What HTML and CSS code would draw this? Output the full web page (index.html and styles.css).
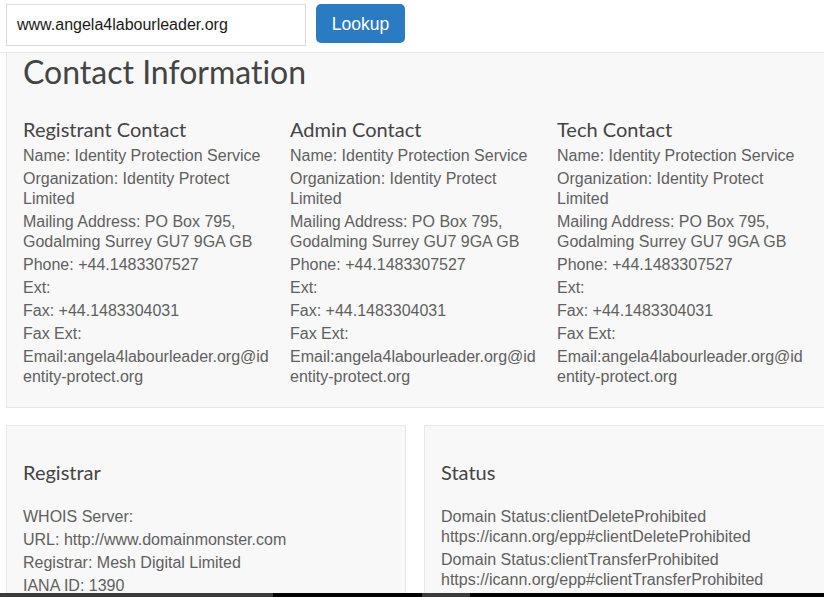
FILE: index.html
```html
<!DOCTYPE html>
<html>
<head>
<meta charset="utf-8">
<link rel="stylesheet" href="styles.css">
</head>
<body>
<header class="topbar">
  <div class="search-input">www.angela4labourleader.org</div>
  <button class="lookup-btn">Lookup</button>
</header>

<section class="panel contact">
  <h1 class="title">Contact Information</h1>
  <div class="cols">
    <div class="col">
      <h3 class="sub">Registrant Contact</h3>
      <p>Name: Identity Protection Service</p>
      <p>Organization: Identity Protect Limited</p>
      <p>Mailing Address: PO Box 795, Godalming Surrey GU7 9GA GB</p>
      <p>Phone: +44.1483307527</p>
      <p>Ext:</p>
      <p>Fax: +44.1483304031</p>
      <p>Fax Ext:</p>
      <p>Email:angela4labourleader.org@identity-protect.org</p>
    </div>
    <div class="col">
      <h3 class="sub">Admin Contact</h3>
      <p>Name: Identity Protection Service</p>
      <p>Organization: Identity Protect Limited</p>
      <p>Mailing Address: PO Box 795, Godalming Surrey GU7 9GA GB</p>
      <p>Phone: +44.1483307527</p>
      <p>Ext:</p>
      <p>Fax: +44.1483304031</p>
      <p>Fax Ext:</p>
      <p>Email:angela4labourleader.org@identity-protect.org</p>
    </div>
    <div class="col">
      <h3 class="sub">Tech Contact</h3>
      <p>Name: Identity Protection Service</p>
      <p>Organization: Identity Protect Limited</p>
      <p>Mailing Address: PO Box 795, Godalming Surrey GU7 9GA GB</p>
      <p>Phone: +44.1483307527</p>
      <p>Ext:</p>
      <p>Fax: +44.1483304031</p>
      <p>Fax Ext:</p>
      <p>Email:angela4labourleader.org@identity-protect.org</p>
    </div>
  </div>
</section>

<div class="lower">
  <section class="panel box registrar">
    <h3 class="sub spaced">Registrar</h3>
    <p>WHOIS Server:</p>
    <p>URL: http://www.domainmonster.com</p>
    <p>Registrar: Mesh Digital Limited</p>
    <p>IANA ID: 1390</p>
  </section>
  <section class="panel box status">
    <h3 class="sub spaced">Status</h3>
    <p>Domain Status:clientDeleteProhibited https://icann.org/epp#clientDeleteProhibited</p>
    <p>Domain Status:clientTransferProhibited https://icann.org/epp#clientTransferProhibited</p>
  </section>
</div>

<div class="taskstrip">
  <span class="seg gray w1"></span>
  <span class="seg black w2"></span>
  <span class="seg gray w3"></span>
  <span class="seg black fill"></span>
</div>
</body>
</html>
```

FILE: styles.css
```css
html, body {
  margin: 0;
  padding: 0;
  height: 100%;
  overflow: hidden;
  background: #ffffff;
  font-family: "Liberation Sans", Arial, sans-serif;
  font-size: 16px;
  color: #606060;
}

.topbar {
  display: flex;
  align-items: flex-start;
  gap: 10px;
  padding: 4px 6px 6px 6px;
  height: 42px;
  border-bottom: 1px solid #e8e8e8;
}

.search-input {
  box-sizing: border-box;
  width: 300px;
  height: 42px;
  border: 1px solid #dcdcdc;
  padding: 0 10px;
  line-height: 40px;
  font-size: 16px;
  color: #1a1a1a;
  background: #fff;
}

.lookup-btn {
  box-sizing: border-box;
  width: 89px;
  height: 39px;
  border: none;
  border-radius: 5px;
  background: #2b7bc4;
  color: #ffffff;
  font-family: "Liberation Sans", Arial, sans-serif;
  font-size: 17.5px;
  padding: 2px 0 0 0;
  margin: 0;
}

.panel {
  background: #f8f8f8;
  border: 1px solid #e8e8e8;
  box-sizing: border-box;
}

.contact {
  margin: 0 -20px 0 6px;
  border-top: none;
  padding: 0 16px 17px 16px;
}

.title {
  margin: 0;
  font-family: Lato, sans-serif;
  font-weight: 400;
  font-size: 32px;
  line-height: 1.2;
  color: #444444;
  font-variant-ligatures: none;
}

.cols {
  display: flex;
  margin-top: 26px;
}

.col {
  flex: 0 0 267px;
  width: 267px;
  min-width: 0;
  box-sizing: border-box;
  padding-right: 17px;
}

.sub {
  margin: 0 0 4.5px 0;
  font-family: Lato, sans-serif;
  font-weight: 400;
  font-size: 20px;
  line-height: 24px;
  color: #444444;
  font-variant-ligatures: none;
}

p {
  margin: 0 0 3px 0;
  line-height: 20px;
  overflow-wrap: anywhere;
}

.lower {
  display: flex;
  gap: 18px;
  margin: 17px 0 0 6px;
}

.box {
  padding: 34px 16px 20px 16px;
  height: 200px;
}

.registrar {
  flex: 0 0 400px;
}

.status {
  flex: 0 0 402px;
}

.spaced {
  margin-bottom: 23px;
}

.taskstrip {
  position: fixed;
  left: 0;
  right: 0;
  bottom: 0;
  height: 4px;
  display: flex;
}

.seg {
  display: block;
  height: 100%;
}

.gray { background: #3a3a3a; }
.black { background: #000000; }
.w1 { width: 273px; }
.w2 { width: 149px; }
.w3 { width: 48px; }
.fill { flex: 1; }
```
